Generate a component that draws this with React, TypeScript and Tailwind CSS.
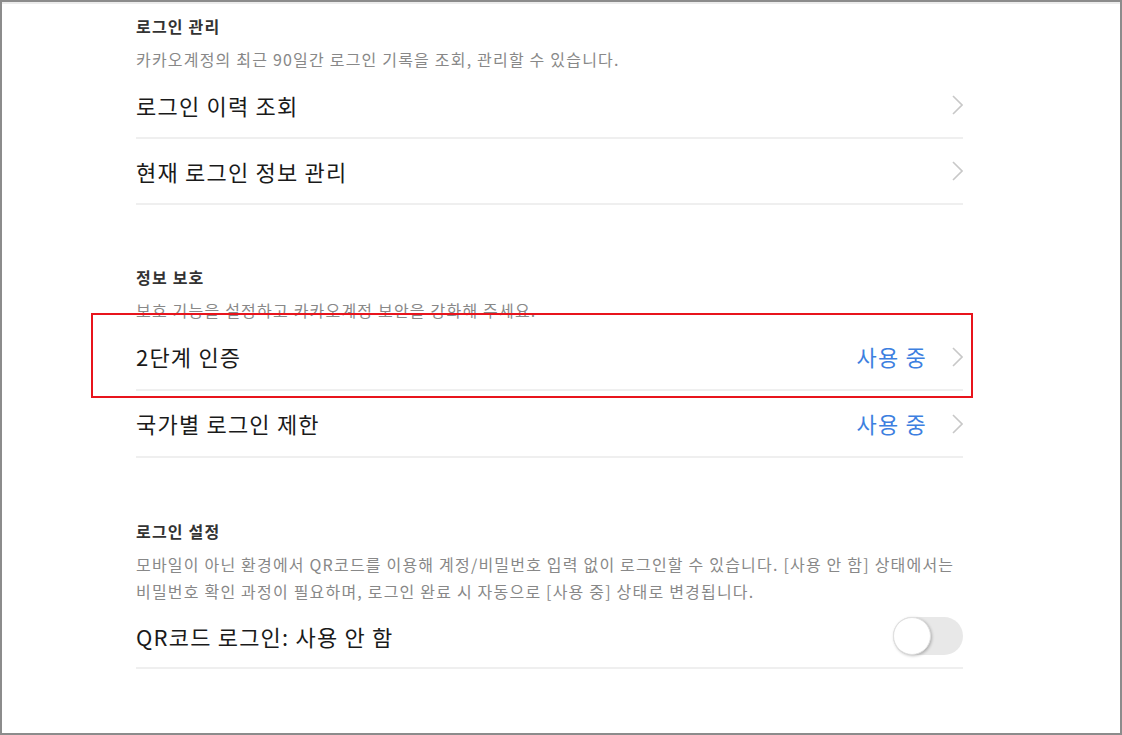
import React from 'react';

const Chevron = () => (
  <svg width="11" height="20" viewBox="0 0 11 20" className="shrink-0">
    <polyline points="1,1 10,10 1,19" fill="none" stroke="#c8c8c8" strokeWidth="1.6" />
  </svg>
);

const Row = ({ label, status, h = 'h-[67px]' }: { label: string; status?: string; h?: string }) => (
  <div className={`flex ${h} items-center justify-between border-b-2 border-[#efefef]`}>
    <span className="text-[22px] tracking-[1.2px] text-[#1a1a1a]">{label}</span>
    <div className="flex items-center gap-[25px]">
      {status && <span className="text-[22px] tracking-[1.2px] text-[#3d7fe0]">{status}</span>}
      <Chevron />
    </div>
  </div>
);

const SectionHead = ({ title, children }: { title: string; children: React.ReactNode }) => (
  <div>
    <h3 className="text-[16px] font-bold leading-[24px] tracking-[1.2px] text-[#333]">{title}</h3>
    <p className="mt-[8px] text-[16px] leading-[27px] tracking-[1.2px] text-[#888]">{children}</p>
  </div>
);

export default function App() {
  return (
    <div
      className="relative h-[735px] w-[1122px] overflow-hidden border-2 border-[#8c8c8c] bg-white"
      style={{ fontFamily: '"Noto Sans CJK KR", "Noto Sans", sans-serif' }}
    >
      <div className="h-[2px] bg-[#ececec]" />
      <div className="ml-[134px] w-[827px] pt-[10px]">
        {/* 로그인 관리 */}
        <SectionHead title="로그인 관리">카카오계정의 최근 90일간 로그인 기록을 조회, 관리할 수 있습니다.</SectionHead>
        <Row label="로그인 이력 조회" h="h-[66px]" />
        <Row label="현재 로그인 정보 관리" h="h-[66px]" />

        {/* 정보 보호 */}
        <div className="mt-[60px]">
          <SectionHead title="정보 보호">보호 기능을 설정하고 카카오계정 보안을 강화해 주세요.</SectionHead>
        </div>
        <Row label="2단계 인증" status="사용 중" />
        <Row label="국가별 로그인 제한" status="사용 중" />

        {/* 로그인 설정 */}
        <div className="mt-[61px]">
          <SectionHead title="로그인 설정">
            모바일이 아닌 환경에서 QR코드를 이용해 계정/비밀번호 입력 없이 로그인할 수 있습니다. [사용 안 함] 상태에서는
            <br />
            비밀번호 확인 과정이 필요하며, 로그인 완료 시 자동으로 [사용 중] 상태로 변경됩니다.
          </SectionHead>
        </div>
        <div className="flex h-[64px] items-center justify-between border-b-2 border-[#efefef]">
          <span className="text-[22px] tracking-[1.2px] text-[#1a1a1a]">QR코드 로그인: 사용 안 함</span>
          <div className="relative h-[38px] w-[70px] rounded-full bg-[#e8e8e8]">
            <div className="absolute left-0 top-0 h-[38px] w-[38px] rounded-full border border-[#e0e0e0] bg-white shadow-[1px_1px_3px_rgba(0,0,0,0.25)]" />
          </div>
        </div>
      </div>

      {/* highlight */}
      <div className="absolute left-[89px] top-[311px] h-[85px] w-[882px] border-2 border-[#e8141c]" />
    </div>
  );
}
